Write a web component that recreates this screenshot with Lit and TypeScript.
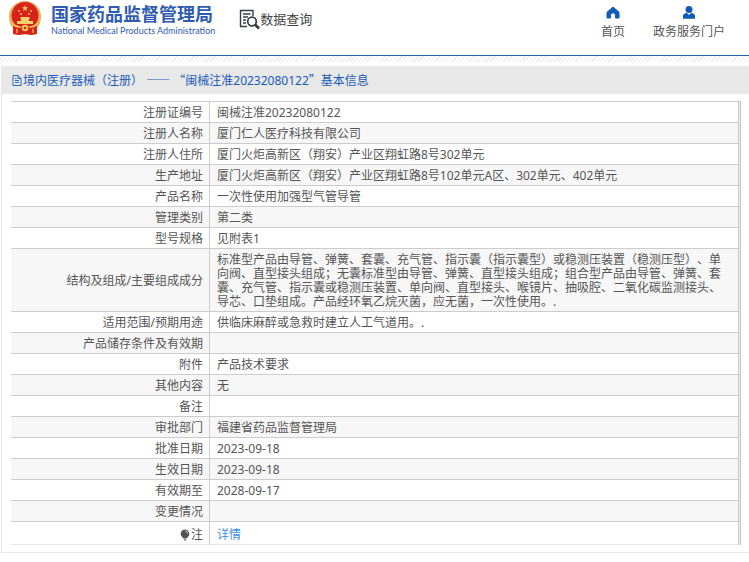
import { LitElement, html, css, nothing } from "lit";
import { customElement } from "lit/decorators.js";

interface Row {
  label: string;
  value: string;
}

const rows: Row[] = [
  { label: "注册证编号", value: "闽械注准20232080122" },
  { label: "注册人名称", value: "厦门仁人医疗科技有限公司" },
  { label: "注册人住所", value: "厦门火炬高新区（翔安）产业区翔虹路8号302单元" },
  { label: "生产地址", value: "厦门火炬高新区（翔安）产业区翔虹路8号102单元A区、302单元、402单元" },
  { label: "产品名称", value: "一次性使用加强型气管导管" },
  { label: "管理类别", value: "第二类" },
  { label: "型号规格", value: "见附表1" },
  {
    label: "结构及组成/主要组成成分",
    value:
      "标准型产品由导管、弹簧、套囊、充气管、指示囊（指示囊型）或稳测压装置（稳测压型）、单向阀、直型接头组成；无囊标准型由导管、弹簧、直型接头组成；组合型产品由导管、弹簧、套囊、充气管、指示囊或稳测压装置、单向阀、直型接头、喉镜片、抽吸腔、二氧化碳监测接头、导芯、口垫组成。产品经环氧乙烷灭菌，应无菌，一次性使用。.",
  },
  { label: "适用范围/预期用途", value: "供临床麻醉或急救时建立人工气道用。." },
  { label: "产品储存条件及有效期", value: "" },
  { label: "附件", value: "产品技术要求" },
  { label: "其他内容", value: "无" },
  { label: "备注", value: "" },
  { label: "审批部门", value: "福建省药品监督管理局" },
  { label: "批准日期", value: "2023-09-18" },
  { label: "生效日期", value: "2023-09-18" },
  { label: "有效期至", value: "2028-09-17" },
  { label: "变更情况", value: "" },
];

@customElement("site-header")
class SiteHeader extends LitElement {
  static styles = css`
    :host {
      display: block;
      border-bottom: 1px solid #1f66a8;
    }
    .bar {
      display: flex;
      align-items: flex-start;
      height: 55px;
      padding: 0 24px 0 8px;
      background: #fff;
    }
    a {
      color: inherit;
      text-decoration: none;
    }
    .brand {
      display: flex;
      gap: 9px;
      color: #2f5bb0;
    }
    .emblem {
      width: 34px;
      height: 36px;
    }
    .names {
      display: flex;
      flex-direction: column;
      padding-top: 4px;
    }
    .cn {
      font-size: 18px;
      line-height: 20px;
      font-weight: 700;
    }
    .en {
      font-family: Lato, sans-serif;
      font-size: 9px;
      line-height: 14px;
    }
    .query {
      display: flex;
      align-items: center;
      margin-left: 24px;
      padding-top: 8px;
      color: #444;
      font-size: 13px;
      line-height: 20px;
    }
    .query svg {
      width: 21px;
      height: 22px;
    }
    nav {
      display: flex;
      gap: 28px;
      margin-left: auto;
      padding-top: 6px;
    }
    .item {
      display: flex;
      flex-direction: column;
      align-items: center;
      gap: 5px;
      color: #555;
      line-height: 16px;
    }
    .item svg {
      width: 14px;
      height: 13px;
    }
  `;

  render() {
    return html`
      <header class="bar">
        <a class="brand" href="#home">
          <svg class="emblem" viewBox="0 0 34 36" aria-hidden="true">
            <path d="M17 1C8 1 1 8 1 16c0 6 2 10 4 12v6l6 1 6-1 6 1 6-1v-6c2-2 4-6 4-12C33 8 26 1 17 1z" fill="#e8b05a" />
            <circle cx="17" cy="15.500" r="13.500" fill="#d8231d" />
            <path d="M17 5l.8 2.300h2.400l-1.900 1.500.7 2.300-2-1.400-2 1.400.7-2.300-1.900-1.500h2.400z" fill="#f7c95c" />
            <g fill="#f7d070">
              <circle cx="11" cy="11" r=".9" />
              <circle cx="13" cy="14" r=".9" />
              <circle cx="21" cy="14" r=".9" />
              <circle cx="23" cy="11" r=".9" />
              <path d="M13 17h8l1 2H12zM13 19h8v2h-8zM9 21h16v3H9z" />
            </g>
            <path d="M5 26c4 2 7 2 9 1.500a4 4 0 0 1 6 0c2 .5 5 .5 9-1.500v8l-6 1-6-1-6 1-6-1z" fill="#d8231d" />
            <path d="M4 23c3 3 6 4 9 4M30 23c-3 3-6 4-9 4M9 33v-4M25 33v-4" fill="none" stroke="#f0c64c" stroke-width="1.300" />
            <circle cx="17" cy="28" r="3.300" fill="#f2ca50" />
            <circle cx="17" cy="28" r="1.300" fill="#d8231d" />
          </svg>
          <span class="names">
            <span class="cn">国家药品监督管理局</span>
            <span class="en">National Medical Products Administration</span>
          </span>
        </a>
        <a class="query" href="#query">
          <svg viewBox="0 0 21 22" fill="none" stroke="#3a3c44" aria-hidden="true">
            <path d="M8 18.500H1.500V2.500H14V8" stroke-width="1.400" />
            <path d="M4 6h7.500M4 9h5M4 12h3M4 15h3" stroke-width="1.300" />
            <circle cx="13" cy="13.500" r="4.300" stroke-width="1.700" />
            <path d="M16 16.500l4 4" stroke-width="2.600" />
          </svg>
          数据查询
        </a>
        <nav>
          <a class="item" href="#index">
            <svg viewBox="0 0 14 13" aria-hidden="true">
              <path d="M7 1l6 5.200V12H9.500V9.300a2.500 2.500 0 0 0-5 0V12H1V6.200z" fill="#0f5bb8" stroke="#0f5bb8" stroke-linejoin="round" />
            </svg>
            首页
          </a>
          <a class="item" href="#portal">
            <svg viewBox="0 0 14 13" fill="#0f5bb8" aria-hidden="true">
              <circle cx="7" cy="3.500" r="3.500" />
              <path d="M1 12.800V10c0-1.800 1.500-2.800 4-3L7 9l2-2c2.500.2 4 1.200 4 3v2.800z" />
            </svg>
            政务服务门户
          </a>
        </nav>
      </header>
    `;
  }
}

@customElement("record-table")
class RecordTable extends LitElement {
  static styles = css`
    :host {
      display: block;
      border-right: 1px solid #c8c8c8;
      padding-right: 1px;
      background: #ececec;
    }
    table {
      width: 100%;
      border-collapse: separate;
      border-spacing: 0;
      border-right: 1px solid #c8c8c8;
      background: #fff;
      color: #555;
      line-height: 14px;
    }
    th,
    td {
      height: 14px;
      padding: 4px 7px 2px;
      border-top: 1px solid #ccc;
      font-weight: 400;
    }
    th {
      width: 184px;
      padding: 4px 6px 2px 8px;
      border-right: 1px solid #ccc;
      text-align: right;
    }
    td {
      text-align: left;
    }
    tr:nth-child(odd) {
      background: #fff;
    }
    tr:nth-child(even) {
      background: #f7f7f7;
    }
    .note th,
    .note td {
      padding-top: 6px;
      border-bottom: 1px solid #e6e6ea;
    }
    .bulb {
      width: 10px;
      height: 12px;
      margin-right: 1px;
      vertical-align: -2px;
    }
    a {
      color: #3b8ee5;
      text-decoration: none;
    }
  `;

  render() {
    return html`
      <table>
        <tbody>
          ${rows.map(
            (row) => html`<tr>
              <th scope="row">${row.label}</th>
              <td>${row.value || nothing}</td>
            </tr>`
          )}
          <tr class="note">
            <th scope="row"><svg class="bulb" viewBox="0 0 10 12" aria-hidden="true">
              <path d="M5 .5a4.300 4.300 0 0 0-2.600 7.700L3.500 9.500h3l1.100-1.300A4.300 4.300 0 0 0 5 .5zM3.800 10.300h2.400L5.700 11.500H4.300z" fill="#555" />
              <path d="M5.500 2a2.700 2.700 0 0 1 2.200 2.300" fill="none" stroke="#fff" stroke-width=".8" />
            </svg>注</th>
            <td><a href="#detail">详情</a></td>
          </tr>
        </tbody>
      </table>
    `;
  }
}

@customElement("app-root")
class AppRoot extends LitElement {
  static styles = css`
    :host {
      display: block;
      font-family: "Noto Sans", "Noto Sans CJK SC", sans-serif;
      font-size: 12px;
      text-spacing-trim: space-all;
    }
    main {
      padding: 10px 0 9px 1px;
      background: linear-gradient(#fff, #fff) 0 6px no-repeat,
        repeating-linear-gradient(135deg, #fff 0 2px, #ececec 2px 3px);
    }
    .panel {
      border: solid #e6e6ea;
      border-width: 0 0 1px 1px;
      padding-bottom: 7px;
    }
    h1 {
      display: flex;
      align-items: center;
      height: 28px;
      margin: 0 0 7px;
      padding-left: 10px;
      background: #e8e8e8;
      color: #1a5cb8;
      font-size: 12px;
      font-weight: 400;
      white-space: pre;
    }
    h1 svg {
      width: 10px;
      height: 11px;
      margin-right: 1px;
    }
    .wide {
      font-family: "Noto Sans CJK SC", sans-serif;
    }
    record-table {
      margin: 0 8px 0 9px;
    }
  `;

  render() {
    return html`
      <site-header></site-header>
      <main>
        <section class="panel">
          <h1><svg viewBox="0 0 10 11" fill="none" stroke="#1a5cb8" stroke-width=".9" aria-hidden="true"><path d="M1 .5h5l3 3v7H1zM6 .5v3h3M3 5.500h4M3 7.500h4M3 3.500h1.500" /></svg><span lang="zh-CN">境内医疗器械（注册） <span class="wide">——</span> <span class="wide">“</span>闽械注准20232080122<span class="wide">”</span>基本信息</span></h1>
          <record-table></record-table>
        </section>
      </main>
    `;
  }
}
